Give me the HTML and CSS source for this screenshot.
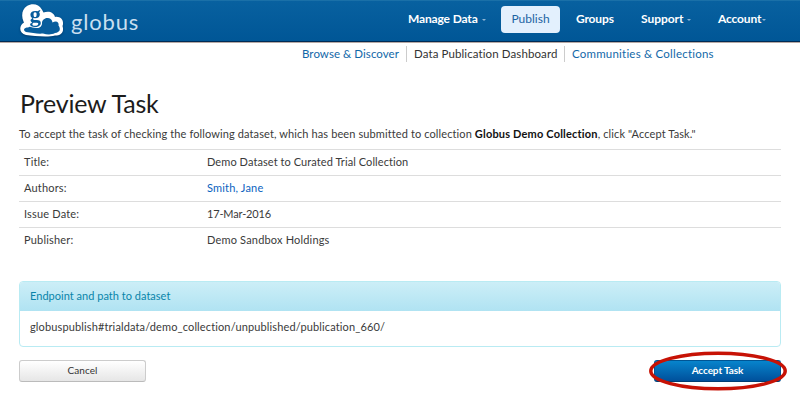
FILE: index.html
```html
<!DOCTYPE html>
<html lang="en">
<head>
<meta charset="utf-8">
<title>Globus - Preview Task</title>
<link rel="stylesheet" href="styles.css">
</head>
<body>
<header class="topbar">
  <a class="brand">
    <svg class="logo" width="44" height="34" viewBox="0 0 44 34">
      <path class="cloud" d="M3.500 17.500C1 12 2 5 7 2C12-1 19 0 21.500 5C22.500 6.500 23 7.500 23.500 8.500C29 6.500 34 8.500 35 13C41 12 44.500 17 42.500 22C44.500 28 41 31.500 35 31.500C28 33.500 14 32 6 31C-1 29.500-1.500 22 4 18.500Z"/>
      <path class="hollow" d="M6 28C2.500 26 4 23.500 8 23.500C11 21.500 14 22.500 17 24C20 24 22 22 22 19C22 16 25 13.500 28 14C31 14.500 32 16 32.500 18.500C36 16 39.500 18 38.500 21.500C41 25 40 28.500 35 29C31 31 27 30.500 23 29.500C18 30 12 29 6 28Z"/>
      <text class="g" x="9.500" y="17.500">g</text>
    </svg>
    <span class="wordmark">globus</span>
  </a>
  <nav class="menu">
    <a class="item manage">Manage Data<i class="caret"></i></a>
    <a class="item active">Publish</a>
    <a class="item groups">Groups</a>
    <a class="item support">Support<i class="caret"></i></a>
    <a class="item account">Account<i class="caret"></i></a>
  </nav>
</header>
<nav class="subnav">
  <a class="browse">Browse &amp; Discover</a>
  <a class="current">Data Publication Dashboard</a>
  <a class="communities">Communities &amp; Collections</a>
</nav>
<main>
  <h1>Preview Task</h1>
  <p class="intro">To accept the task of checking the following dataset, which has been submitted to collection <b>Globus Demo Collection</b>, click "Accept Task."</p>
  <dl class="details">
    <div><dt>Title:</dt><dd class="title">Demo Dataset to Curated Trial Collection</dd></div>
    <div><dt>Authors:</dt><dd><a>Smith, Jane</a></dd></div>
    <div><dt>Issue Date:</dt><dd class="date">17-Mar-2016</dd></div>
    <div><dt>Publisher:</dt><dd>Demo Sandbox Holdings</dd></div>
  </dl>
  <section class="panel">
    <h2>Endpoint and path to dataset</h2>
    <p>globuspublish#trialdata/demo_collection/unpublished/publication_660/</p>
  </section>
  <div class="actions">
    <button class="cancel">Cancel</button>
    <div class="accept-wrap">
      <button class="accept">Accept Task</button>
      <svg class="ring" width="140" height="40" viewBox="0 0 140 40"><ellipse cx="70" cy="20" rx="67.200" ry="17.800"/></svg>
    </div>
  </div>
</main>
</body>
</html>
```
FILE: styles.css
```css
* { box-sizing: border-box; }
body {
  margin: 0;
  min-height: 412px;
  background: #fff;
  color: #3a3a3a;
  font: 11px/16px Lato, "Open Sans", sans-serif;
  letter-spacing: .18px;
}
h1, h2, p, dl, dd { margin: 0; }
a { color: #0a62c0; text-decoration: none; white-space: nowrap; }
.topbar {
  height: 43px;
  display: flex;
  background: linear-gradient(#0861a0, #005696);
  border-bottom: 1px solid #b8aaa5;
  box-shadow: inset 0 -1px #002b55, inset 0 1px #1a70a8;
}
.brand { display: flex; width: 389px; padding: 4px 0 0 20px; }
.logo { flex: none; overflow: visible; filter: drop-shadow(0 1px 1px #00396b); }
.cloud { fill: #fff; }
.hollow { fill: #075d9d; }
.g { font: bold 23px "Liberation Serif", serif; fill: #075d9d; stroke: #fff; stroke-width: 1.5px; paint-order: stroke; letter-spacing: 0; }
.wordmark { margin: 7px 0 0 7px; color: #c9dff0; font-size: 22px; line-height: 22px; font-weight: 400; letter-spacing: .8px; }
.menu { display: flex; padding-top: 6px; }
.item { height: 27px; line-height: 25px; color: #fff; font-size: 12px; font-weight: bold; letter-spacing: -.15px; }
.manage { margin-left: 19px; width: 93px; }
.active { width: 59px; background: #e3f0fd; color: #1c64a3; border-radius: 4px; text-align: center; font-weight: 400; letter-spacing: 0; }
.groups { margin-left: 16px; width: 65px; }
.support { width: 77px; letter-spacing: -.05px; }
.account { width: 60px; }
.caret { display: inline-block; margin-left: 4px; vertical-align: 2px; border: 2.5px solid transparent; border-top-color: #8eb4d3; border-bottom: 0; }
.account .caret { margin-left: 1px; }
.subnav { display: flex; margin: 3px 0 0 302px; font-size: 11.5px; line-height: 15px; }
.subnav a { height: 16px; color: #1268a8; }
.subnav .browse { width: 104px; letter-spacing: .06px; }
.subnav .current { width: 159px; padding-left: 7px; color: #333; border: solid #ccc; border-width: 0 1px; letter-spacing: .1px; }
.subnav .communities { padding-left: 7px; letter-spacing: .21px; }
main { margin: 27px 19px 0; }
h1 { padding-left: 1px; color: #1c1c1c; font-size: 25px; line-height: 28px; font-weight: 400; letter-spacing: -.2px; }
.intro { margin-top: 9px; white-space: nowrap; line-height: 16px; letter-spacing: .11px; }
.intro b { color: #111; letter-spacing: .18px; }
.details { margin-top: 7px; }
.details div { display: flex; height: 26px; border-top: 1px solid #ddd; line-height: 24px; }
.details dt { width: 188px; padding-left: 5px; }
.details .title { letter-spacing: .08px; }
.details .date { letter-spacing: -.16px; }
.panel { margin-top: 28px; height: 66px; border: 1px solid #b9ebf3; border-radius: 4px; overflow: hidden; }
.panel h2 { height: 29px; padding-left: 10px; background: linear-gradient(#cceef7, #b0e3f2); color: #0985aa; font-size: 11px; line-height: 28px; font-weight: 400; letter-spacing: .02px; }
.panel p { padding: 8px 10px; letter-spacing: .13px; }
.actions { display: flex; justify-content: space-between; margin-top: 13px; }
button { display: block; width: 127px; height: 22px; padding: 0 0 2px; border-radius: 3px; font: bold 10px/18px Lato, sans-serif; letter-spacing: -.1px; }
.cancel { border: 1px solid #ccc; border-bottom-color: #bbb; background: linear-gradient(#fff, #e6e6e6); color: #333; font-weight: 400; letter-spacing: .1px; }
.accept-wrap { position: relative; height: 22px; }
.accept { border: 1px solid #005594; border-bottom-color: #003e73; background: linear-gradient(#0784cc, #00509b); color: #fff; }
.ring { position: absolute; left: -6px; top: -9px; fill: none; stroke: #c71205; stroke-width: 3.5; overflow: visible; }
```
